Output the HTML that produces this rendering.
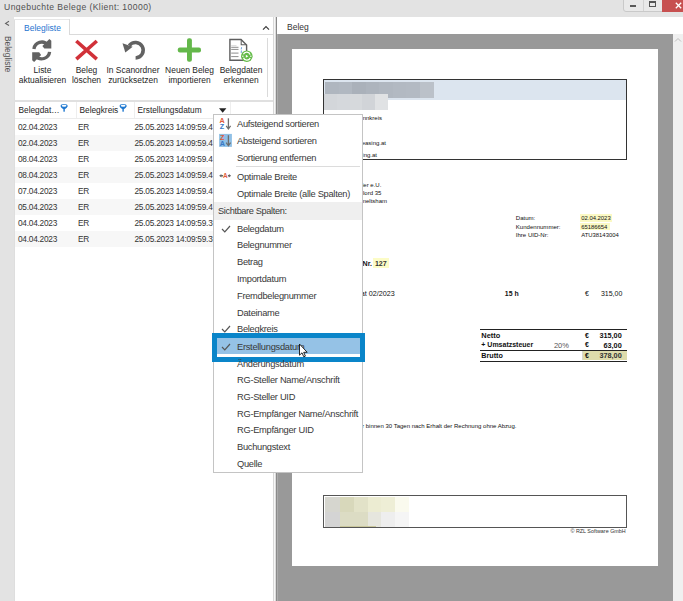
<!DOCTYPE html>
<html><head><meta charset="utf-8">
<style>
*{margin:0;padding:0;box-sizing:border-box}
html,body{width:683px;height:601px;overflow:hidden;background:#e3e3e3;font-family:"Liberation Sans",sans-serif;color:#333;position:relative}
.a{position:absolute}
.t{position:absolute;white-space:nowrap;line-height:1}
svg{position:absolute;overflow:visible}
</style></head><body>
<div class="t" style="top:3px;font-size:8.6px;color:#505050;letter-spacing:0.42px;left:4px;">Ungebuchte Belege (Klient: 10000)</div>
<div class="a" style="left:623px;top:-1px;width:40px;height:12.5px;background:#e9e9e9;border:1px solid #c9c9c9;border-radius:0 0 0 3px"></div>
<div class="a" style="left:643px;top:0px;width:1px;height:11px;background:#d2d2d2;"></div>
<div class="a" style="left:630px;top:5px;width:6px;height:2px;background:#5a5a5a;"></div>
<div class="a" style="left:649px;top:1px;width:7px;height:6px;border:1px solid #555;border-top-width:2px"></div>
<div class="a" style="left:662px;top:0px;width:21px;height:11.5px;background:#c75050;"></div>
<svg style="left:675px;top:1.5px" width="7" height="7"><path d="M0.8 0.8L6.2 6.2M6.2 0.8L0.8 6.2" stroke="#fff" stroke-width="1.3"/></svg>
<svg style="left:3px;top:20px" width="8" height="8"><path d="M6 1.3L2.6 3.4L6 5.5" stroke="#606060" stroke-width="1.1" fill="none"/></svg>
<div class="t" style="left:12px;top:36px;font-size:8.4px;color:#505050;transform-origin:0 0;transform:rotate(90deg)">Belegliste</div>
<div class="a" style="left:14px;top:17px;width:259px;height:584px;background:#fff;"></div>
<div class="a" style="left:14px;top:19px;width:1px;height:582px;background:#dedede;"></div>
<div class="a" style="left:272.7px;top:17px;width:1px;height:584px;background:#d8d8d8;"></div>
<div class="a" style="left:273.7px;top:17px;width:1.3px;height:584px;background:#f7f7f7;"></div>
<div class="a" style="left:14px;top:19px;width:56px;height:1px;background:#e6e6e6;"></div>
<div class="a" style="left:69px;top:19px;width:1px;height:16px;background:#dadada;"></div>
<div class="a" style="left:69px;top:34px;width:204px;height:1px;background:#dadada;"></div>
<div class="t" style="top:24px;font-size:8.5px;color:#1f74cf;left:24px;">Belegliste</div>
<svg style="left:262px;top:25px" width="8" height="6"><path d="M1 4.6L4 1.6L7 4.6" stroke="#3c3c3c" stroke-width="1.15" fill="none"/></svg>
<div class="a" style="left:267px;top:38px;width:1px;height:59px;background:#dadada;"></div>
<div class="a" style="left:14px;top:100px;width:259px;height:2px;background:#e0e0e0;"></div>
<svg style="left:28px;top:36px" width="28" height="28" viewBox="0 0 28 28">
 <path d="M5.9 13.0A7.9 7.9 0 0 1 19.8 8.9" stroke="#626262" stroke-width="3.3" fill="none"/>
 <path d="M14.4 10.0L21.4 3.0L23.3 4.7V12.6H16.3Z" fill="#626262"/>
 <path d="M21.6 15.9A7.9 7.9 0 0 1 7.7 20.0" stroke="#626262" stroke-width="3.3" fill="none"/>
 <path d="M13.1 18.9L6.1 25.9L4.2 24.2V16.3H11.2Z" fill="#626262"/>
</svg>
<svg style="left:70px;top:36px" width="32" height="28" viewBox="0 0 32 28">
 <path d="M6.3 5L26.8 23.2M26.8 5L6.3 23.2" stroke="#d13139" stroke-width="3.6"/>
</svg>
<svg style="left:118px;top:36px" width="32" height="28" viewBox="0 0 32 28">
 <path d="M17.6 21.9A7.75 7.75 0 1 0 11.2 9.6" stroke="#626262" stroke-width="3.5" fill="none"/>
 <path d="M7.3 16.6L4.5 7.3L14.7 10.8Z" fill="#626262"/>
</svg>
<svg style="left:174px;top:36px" width="32" height="28" viewBox="0 0 32 28">
 <rect x="13" y="2.3" width="4.9" height="23.5" rx="2" fill="#64b84b"/>
 <rect x="3.8" y="11.6" width="23.2" height="4.8" rx="2" fill="#64b84b"/>
</svg>
<svg style="left:225px;top:36px" width="32" height="28" viewBox="0 0 32 28">
 <path d="M4.9 3.5H16L21.6 9V24.3H4.9Z" fill="#fff" stroke="#5e5e5e" stroke-width="1.4" stroke-linejoin="miter"/>
 <path d="M16.2 3.8V8.8H21.3" fill="none" stroke="#5e5e5e" stroke-width="1.05"/>
 <path d="M6.2 9.6H11.5" stroke="#d8d8d8" stroke-width="0.9"/>
 <path d="M6.2 11.3H13.5M6.2 13.4H13.5M6.2 17.1H13.5M6.2 20.6H13.5" stroke="#8e8e8e" stroke-width="1"/>
 <path d="M16.6 11.2L16.2 13.4M16.4 14.5L16.2 17" stroke="#5e98d6" stroke-width="0.9"/>
 <circle cx="21.8" cy="20.2" r="5.8" fill="#64bb49"/>
 <path d="M18.4 18.3A3.6 3.6 0 0 1 25.1 18.6M25.2 22.1A3.6 3.6 0 0 1 18.5 21.8" stroke="#fff" stroke-width="1.25" fill="none"/>
 <path d="M17 20.2H18.6M25 20.2H26.6" stroke="#fff" stroke-width="1"/>
 <path d="M20.8 18.7L23.3 20.2L20.8 21.7Z" fill="#fff"/>
</svg>
<div class="t" style="top:66px;left:-7.5px;width:100px;text-align:center;font-size:8.45px;color:#262626">Liste</div>
<div class="t" style="top:76px;left:-7.5px;width:100px;text-align:center;font-size:8.45px;color:#262626">aktualisieren</div>
<div class="t" style="top:66px;left:36.5px;width:100px;text-align:center;font-size:8.45px;color:#262626">Beleg</div>
<div class="t" style="top:76px;left:36.5px;width:100px;text-align:center;font-size:8.45px;color:#262626">löschen</div>
<div class="t" style="top:66px;left:83px;width:100px;text-align:center;font-size:8.45px;color:#262626">In Scanordner</div>
<div class="t" style="top:76px;left:83px;width:100px;text-align:center;font-size:8.45px;color:#262626">zurücksetzen</div>
<div class="t" style="top:66px;left:139.5px;width:100px;text-align:center;font-size:8.45px;color:#262626">Neuen Beleg</div>
<div class="t" style="top:76px;left:139.5px;width:100px;text-align:center;font-size:8.45px;color:#262626">importieren</div>
<div class="t" style="top:66px;left:191px;width:100px;text-align:center;font-size:8.45px;color:#262626">Belegdaten</div>
<div class="t" style="top:76px;left:191px;width:100px;text-align:center;font-size:8.45px;color:#262626">erkennen</div>
<div class="a" style="left:15px;top:117.5px;width:258px;height:1px;background:#ececec;"></div>
<div class="a" style="left:76px;top:102px;width:1px;height:16px;background:#eeeeee;"></div>
<div class="a" style="left:134px;top:102px;width:1px;height:16px;background:#eeeeee;"></div>
<div class="a" style="left:230px;top:102px;width:1px;height:16px;background:#eeeeee;"></div>
<div class="t" style="top:106px;font-size:8.3px;color:#262626;left:18.5px;">Belegdat…</div>
<div class="t" style="top:106px;font-size:8.3px;color:#262626;left:79.5px;">Belegkreis</div>
<div class="t" style="top:106px;font-size:8.3px;color:#262626;left:137.5px;">Erstellungsdatum</div>
<svg style="left:59.5px;top:103px" width="8" height="10"><ellipse cx="4.1" cy="3.0" rx="3.5" ry="1.9" fill="#1e78d0"/><path d="M0.8 3.3Q1.4 5.2 3.4 6.3V8.6Q4.1 9.1 4.8 8.6V6.3Q6.8 5.2 7.4 3.3Z" fill="#1e78d0"/><ellipse cx="4.1" cy="2.8" rx="2.4" ry="0.95" fill="#fff"/></svg>
<svg style="left:119px;top:103px" width="8" height="10"><ellipse cx="4.1" cy="3.0" rx="3.5" ry="1.9" fill="#1e78d0"/><path d="M0.8 3.3Q1.4 5.2 3.4 6.3V8.6Q4.1 9.1 4.8 8.6V6.3Q6.8 5.2 7.4 3.3Z" fill="#1e78d0"/><ellipse cx="4.1" cy="2.8" rx="2.4" ry="0.95" fill="#fff"/></svg>
<svg style="left:219px;top:107.5px" width="8" height="6"><path d="M0 0.3H7.4L3.7 4.8Z" fill="#222"/></svg>
<div class="t" style="top:123px;font-size:8.3px;color:#333;letter-spacing:-0.25px;left:18px;">02.04.2023</div>
<div class="t" style="top:123px;font-size:8.3px;color:#333;letter-spacing:-0.2px;left:78px;">ER</div>
<div class="t" style="top:123px;font-size:8.3px;color:#333;letter-spacing:-0.24px;left:134.5px;">25.05.2023 14:09:59.4</div>
<div class="a" style="left:15px;top:134.5px;width:258px;height:16px;background:#f7f7f7;"></div>
<div class="t" style="top:139px;font-size:8.3px;color:#333;letter-spacing:-0.25px;left:18px;">02.04.2023</div>
<div class="t" style="top:139px;font-size:8.3px;color:#333;letter-spacing:-0.2px;left:78px;">ER</div>
<div class="t" style="top:139px;font-size:8.3px;color:#333;letter-spacing:-0.24px;left:134.5px;">25.05.2023 14:09:59.4</div>
<div class="t" style="top:155px;font-size:8.3px;color:#333;letter-spacing:-0.25px;left:18px;">08.04.2023</div>
<div class="t" style="top:155px;font-size:8.3px;color:#333;letter-spacing:-0.2px;left:78px;">ER</div>
<div class="t" style="top:155px;font-size:8.3px;color:#333;letter-spacing:-0.24px;left:134.5px;">25.05.2023 14:09:59.4</div>
<div class="a" style="left:15px;top:166.5px;width:258px;height:16px;background:#f7f7f7;"></div>
<div class="t" style="top:171px;font-size:8.3px;color:#333;letter-spacing:-0.25px;left:18px;">08.04.2023</div>
<div class="t" style="top:171px;font-size:8.3px;color:#333;letter-spacing:-0.2px;left:78px;">ER</div>
<div class="t" style="top:171px;font-size:8.3px;color:#333;letter-spacing:-0.24px;left:134.5px;">25.05.2023 14:09:59.4</div>
<div class="t" style="top:187px;font-size:8.3px;color:#333;letter-spacing:-0.25px;left:18px;">07.04.2023</div>
<div class="t" style="top:187px;font-size:8.3px;color:#333;letter-spacing:-0.2px;left:78px;">ER</div>
<div class="t" style="top:187px;font-size:8.3px;color:#333;letter-spacing:-0.24px;left:134.5px;">25.05.2023 14:09:59.4</div>
<div class="a" style="left:15px;top:198.5px;width:258px;height:16px;background:#f7f7f7;"></div>
<div class="t" style="top:203px;font-size:8.3px;color:#333;letter-spacing:-0.25px;left:18px;">05.04.2023</div>
<div class="t" style="top:203px;font-size:8.3px;color:#333;letter-spacing:-0.2px;left:78px;">ER</div>
<div class="t" style="top:203px;font-size:8.3px;color:#333;letter-spacing:-0.24px;left:134.5px;">25.05.2023 14:09:59.4</div>
<div class="t" style="top:219px;font-size:8.3px;color:#333;letter-spacing:-0.25px;left:18px;">04.04.2023</div>
<div class="t" style="top:219px;font-size:8.3px;color:#333;letter-spacing:-0.2px;left:78px;">ER</div>
<div class="t" style="top:219px;font-size:8.3px;color:#333;letter-spacing:-0.24px;left:134.5px;">25.05.2023 14:09:59.3</div>
<div class="a" style="left:15px;top:230.5px;width:258px;height:16px;background:#f7f7f7;"></div>
<div class="t" style="top:235px;font-size:8.3px;color:#333;letter-spacing:-0.25px;left:18px;">04.04.2023</div>
<div class="t" style="top:235px;font-size:8.3px;color:#333;letter-spacing:-0.2px;left:78px;">ER</div>
<div class="t" style="top:235px;font-size:8.3px;color:#333;letter-spacing:-0.24px;left:134.5px;">25.05.2023 14:09:59.3</div>
<div class="a" style="left:275px;top:17px;width:408px;height:584px;background:#fff;"></div>
<div class="a" style="left:275px;top:17px;width:1px;height:584px;background:#dcdcdc;"></div>
<div class="a" style="left:276px;top:17px;width:1px;height:584px;background:#8a8a8a;"></div>
<div class="a" style="left:277px;top:34px;width:1px;height:567px;background:#ababab;"></div>
<div class="a" style="left:278px;top:34px;width:395px;height:567px;background:#999;"></div>
<div class="a" style="left:673px;top:34px;width:10px;height:567px;background:#f0f0f0;"></div>
<svg style="left:674px;top:37px" width="8" height="6"><path d="M1 4.5L4 1.5L7 4.5" stroke="#bdbdbd" stroke-width="1" fill="none"/></svg>
<div class="t" style="top:23px;font-size:8.5px;color:#333;left:287px;">Beleg</div>
<div class="a" style="left:292px;top:49px;width:366px;height:517px;background:#fff;"></div>
<div class="a" style="left:323px;top:79px;width:304px;height:81px;border:1px solid #333;border-bottom-width:1.5px"></div>
<div class="a" style="left:324px;top:80px;width:302px;height:19.5px;background:#dce5ef;"></div>
<div class="a" style="left:325px;top:82px;width:14px;height:16px;background:#afb6bf;"></div>
<div class="a" style="left:338.5px;top:82px;width:14px;height:16px;background:#b1b8c1;"></div>
<div class="a" style="left:352.0px;top:82px;width:14px;height:16px;background:#aab1ba;"></div>
<div class="a" style="left:365.5px;top:82px;width:14px;height:16px;background:#adb4bd;"></div>
<div class="a" style="left:379.0px;top:82px;width:14px;height:16px;background:#b0b7c0;"></div>
<div class="a" style="left:392.5px;top:82px;width:14px;height:16px;background:#b2b9c2;"></div>
<div class="a" style="left:406.0px;top:82px;width:14px;height:16px;background:#b3bac3;"></div>
<div class="a" style="left:419.5px;top:82px;width:14px;height:16px;background:#bbc1c9;"></div>
<div class="a" style="left:324px;top:93.5px;width:13px;height:16px;background:#d3d6da;"></div>
<div class="a" style="left:336.8px;top:93.5px;width:13px;height:16px;background:#d5d8dc;"></div>
<div class="a" style="left:349.6px;top:93.5px;width:13px;height:16px;background:#d6d9dc;"></div>
<div class="a" style="left:362.4px;top:93.5px;width:13px;height:16px;background:#d1d4d8;"></div>
<div class="a" style="left:375.2px;top:93.5px;width:13px;height:16px;background:#e0e2e4;"></div>
<div class="t" style="top:115px;font-size:6px;color:#111;right:301px;text-align:right;">Sonnkreis</div>
<div class="t" style="top:140px;font-size:6px;color:#111;right:297px;text-align:right;">office@leasing.at</div>
<div class="t" style="top:152px;font-size:6px;color:#111;right:306px;text-align:right;">www.leasing.at</div>
<div class="t" style="top:182px;font-size:6px;color:#111;right:301.7px;text-align:right;">Müller e.U.</div>
<div class="t" style="top:190px;font-size:6px;color:#111;right:301.7px;text-align:right;">Gaslord 35</div>
<div class="t" style="top:198px;font-size:6px;color:#111;right:296px;text-align:right;">Himmeltsham</div>
<div class="a" style="left:579.5px;top:214px;width:32.5px;height:7.5px;background:#fbf9c4;"></div>
<div class="a" style="left:579.5px;top:222.7px;width:30px;height:7.5px;background:#fbf9c4;"></div>
<div class="t" style="top:215px;font-size:6.05px;color:#111;left:515.8px;">Datum:</div>
<div class="t" style="top:224px;font-size:6.05px;color:#111;left:515.8px;">Kundennummer:</div>
<div class="t" style="top:232px;font-size:6.05px;color:#111;left:515.8px;">Ihre UID-Nr:</div>
<div class="t" style="top:216px;font-size:5.9px;color:#111;left:581.2px;">02.04.2023</div>
<div class="t" style="top:225px;font-size:5.9px;color:#111;left:581.2px;">65186654</div>
<div class="t" style="top:233px;font-size:5.9px;color:#111;left:581.2px;">ATU38143004</div>
<div class="a" style="left:372.6px;top:258px;width:16.4px;height:9.5px;background:#fcfcc6;"></div>
<div class="t" style="top:261px;font-size:7.1px;color:#111;font-weight:bold;right:311px;text-align:right;">Rechnung Nr.</div>
<div class="t" style="top:261px;font-size:7.1px;color:#333;font-weight:bold;left:374.9px;">127</div>
<div class="t" style="top:290px;font-size:7.2px;color:#111;right:288.2px;text-align:right;">Leistungszeitraum Leasing Monat 02/2023</div>
<div class="t" style="top:291px;font-size:6.9px;color:#111;font-weight:bold;left:504.8px;">15 h</div>
<div class="t" style="top:291px;font-size:6.9px;color:#111;left:585.1px;">€</div>
<div class="t" style="top:290px;font-size:7.0px;color:#111;right:60.700000000000045px;text-align:right;">315,00</div>
<div class="a" style="left:480px;top:329.2px;width:147px;height:1px;background:#222;"></div>
<div class="a" style="left:480px;top:349.5px;width:147px;height:1.5px;background:#222;"></div>
<div class="a" style="left:582.2px;top:351px;width:44.5px;height:9.2px;background:#dedcab;border-left:1px solid #d8d8d0"></div>
<div class="a" style="left:480px;top:360.5px;width:147px;height:1.2px;background:#222;"></div>
<div class="t" style="top:332px;font-size:7.4px;color:#111;font-weight:bold;left:481.3px;">Netto</div>
<div class="t" style="top:341px;font-size:7.0px;color:#111;font-weight:bold;left:481.3px;">+ Umsatzsteuer</div>
<div class="t" style="top:352px;font-size:7.2px;color:#111;font-weight:bold;left:481.3px;">Brutto</div>
<div class="t" style="top:342px;font-size:7.5px;color:#555;right:114.10000000000002px;text-align:right;">20%</div>
<div class="t" style="top:332px;font-size:7.0px;color:#111;font-weight:bold;left:585.1px;">€</div>
<div class="t" style="top:341px;font-size:7.0px;color:#111;font-weight:bold;left:585.1px;">€</div>
<div class="t" style="top:352px;font-size:7.0px;color:#111;font-weight:bold;left:585.1px;">€</div>
<div class="t" style="top:332px;font-size:7.3px;color:#111;font-weight:bold;right:61.299999999999955px;text-align:right;">315,00</div>
<div class="t" style="top:342px;font-size:7.3px;color:#111;font-weight:bold;right:61.299999999999955px;text-align:right;">63,00</div>
<div class="t" style="top:352px;font-size:7.3px;color:#333;font-weight:bold;right:61.299999999999955px;text-align:right;">378,00</div>
<div class="t" style="top:423px;font-size:6.0px;color:#111;right:166.60000000000002px;text-align:right;">Zahlbar binnen 30 Tagen nach Erhalt der Rechnung ohne Abzug.</div>
<div class="a" style="left:323px;top:495px;width:304px;height:33px;border:1px solid #555"></div>
<div class="a" style="left:324.7px;top:496.7px;width:15.4px;height:15.4px;background:#d6d6cf;"></div>
<div class="a" style="left:324.7px;top:512.1px;width:15.4px;height:14.5px;background:#d4d4d4;"></div>
<div class="a" style="left:340.1px;top:496.7px;width:13.7px;height:15.4px;background:#d8d8bb;"></div>
<div class="a" style="left:340.1px;top:512.1px;width:13.7px;height:14.5px;background:#dcdcc4;"></div>
<div class="a" style="left:353.8px;top:496.7px;width:14.2px;height:15.4px;background:#e2e2c8;"></div>
<div class="a" style="left:353.8px;top:512.1px;width:14.2px;height:14.5px;background:#dcdcc4;"></div>
<div class="a" style="left:368px;top:496.7px;width:12.7px;height:15.4px;background:#ececd2;"></div>
<div class="a" style="left:368px;top:512.1px;width:12.7px;height:14.5px;background:#e6e6de;"></div>
<div class="a" style="left:380.7px;top:496.7px;width:14.2px;height:15.4px;background:#eeeed6;"></div>
<div class="a" style="left:380.7px;top:512.1px;width:14.2px;height:14.5px;background:#eeeeee;"></div>
<div class="a" style="left:394.9px;top:496.7px;width:13.8px;height:15.4px;background:#fafaee;"></div>
<div class="a" style="left:394.9px;top:512.1px;width:13.8px;height:14.5px;background:#f5f5f5;"></div>
<div class="a" style="left:340px;top:526px;width:36px;height:1px;background:#c9c79c;"></div>
<div class="a" style="left:324px;top:500px;width:1px;height:1.5px;background:#fff;"></div>
<div class="a" style="left:324px;top:504px;width:1px;height:1.5px;background:#fff;"></div>
<div class="a" style="left:324px;top:508px;width:1px;height:1.5px;background:#fff;"></div>
<div class="a" style="left:324px;top:512px;width:1px;height:1.5px;background:#fff;"></div>
<div class="a" style="left:324px;top:516px;width:1px;height:1.5px;background:#fff;"></div>
<div class="a" style="left:324px;top:520px;width:1px;height:1.5px;background:#fff;"></div>
<div class="a" style="left:324px;top:524px;width:1px;height:1.5px;background:#fff;"></div>
<div class="t" style="top:529px;font-size:5.4px;color:#333;right:57.299999999999955px;text-align:right;">© RZL Software GmbH</div>
<div class="a" style="left:213px;top:114px;width:150px;height:359px;background:#fff;border:1px solid #c4c4c4"></div>
<div class="a" style="left:236px;top:166px;width:124px;height:1px;background:#dcdcdc;"></div>
<div class="a" style="left:214px;top:202px;width:148px;height:17.5px;background:#efefef;"></div>
<svg style="left:215px;top:115px" width="22" height="35" viewBox="0 0 22 35">
 <text x="4.5" y="8" font-family="Liberation Sans" font-weight="bold" font-size="7.2" fill="#e05a3a">A</text>
 <text x="4.8" y="14.1" font-family="Liberation Sans" font-weight="bold" font-size="7.2" fill="#3a78c4">Z</text>
 <path d="M13.4 3.3V13.2" stroke="#6e6e6e" stroke-width="1.3"/>
 <path d="M11.2 10.8L13.4 13.9L15.6 10.8" stroke="#6e6e6e" stroke-width="1.2" fill="none"/>
 <rect x="4.1" y="18.9" width="12.8" height="13" fill="#90c0e6"/>
 <text x="4.9" y="25" font-family="Liberation Sans" font-weight="bold" font-size="7.2" fill="#e05a3a">Z</text>
 <text x="4.7" y="30.8" font-family="Liberation Sans" font-weight="bold" font-size="7.2" fill="#3a78c4">A</text>
 <path d="M13.4 20.2V30" stroke="#6e6e6e" stroke-width="1.3"/>
 <path d="M11.2 27.6L13.4 30.7L15.6 27.6" stroke="#6e6e6e" stroke-width="1.2" fill="none"/>
</svg>
<svg style="left:215px;top:168px" width="22" height="16" viewBox="0 0 22 16">
 <path d="M4.2 7.7L6.4 5.9V7H8V8.4H6.4V9.5Z" fill="#666"/>
 <text x="7.9" y="10" font-family="Liberation Sans" font-weight="bold" font-size="6.4" fill="#e05a3a">A</text>
 <path d="M16.1 7.7L13.9 5.9V7H12.9V8.4H13.9V9.5Z" fill="#666"/>
</svg>
<div class="t" style="top:120px;font-size:9.3px;color:#383838;letter-spacing:-0.28px;left:237px;">Aufsteigend sortieren</div>
<div class="t" style="top:137px;font-size:9.3px;color:#383838;letter-spacing:-0.28px;left:237px;">Absteigend sortieren</div>
<div class="t" style="top:154px;font-size:9.3px;color:#383838;letter-spacing:-0.28px;left:237px;">Sortierung entfernen</div>
<div class="t" style="top:173px;font-size:9.3px;color:#383838;letter-spacing:-0.28px;left:237px;">Optimale Breite</div>
<div class="t" style="top:190px;font-size:9.3px;color:#383838;letter-spacing:-0.28px;left:237px;">Optimale Breite (alle Spalten)</div>
<div class="t" style="top:207px;font-size:9.2px;color:#383838;letter-spacing:-0.36px;left:218px;">Sichtbare Spalten:</div>
<div class="t" style="top:225px;font-size:9.3px;color:#383838;letter-spacing:-0.28px;left:237px;">Belegdatum</div>
<svg style="left:221px;top:225px" width="10" height="8"><path d="M1 4L3.8 6.8L9 1" stroke="#555" stroke-width="1.2" fill="none"/></svg>
<div class="t" style="top:241px;font-size:9.3px;color:#383838;letter-spacing:-0.28px;left:237px;">Belegnummer</div>
<div class="t" style="top:258px;font-size:9.3px;color:#383838;letter-spacing:-0.28px;left:237px;">Betrag</div>
<div class="t" style="top:275px;font-size:9.3px;color:#383838;letter-spacing:-0.28px;left:237px;">Importdatum</div>
<div class="t" style="top:292px;font-size:9.3px;color:#383838;letter-spacing:-0.28px;left:237px;">Fremdbelegnummer</div>
<div class="t" style="top:309px;font-size:9.3px;color:#383838;letter-spacing:-0.28px;left:237px;">Dateiname</div>
<div class="t" style="top:325px;font-size:9.3px;color:#383838;letter-spacing:-0.28px;left:237px;">Belegkreis</div>
<svg style="left:221px;top:325px" width="10" height="8"><path d="M1 4L3.8 6.8L9 1" stroke="#555" stroke-width="1.2" fill="none"/></svg>
<div class="a" style="left:212px;top:333px;width:153px;height:29px;background:#0a85c9;"></div>
<div class="a" style="left:217px;top:338px;width:143px;height:19px;background:#fff;"></div>
<div class="a" style="left:217px;top:338px;width:143px;height:16px;background:#95c2e6;"></div>
<div class="t" style="top:343px;font-size:9.3px;color:#383838;letter-spacing:-0.28px;left:237px;">Erstellungsdatum</div>
<svg style="left:221px;top:343px" width="10" height="8"><path d="M1 4L3.8 6.8L9 1" stroke="#555" stroke-width="1.2" fill="none"/></svg>
<div class="t" style="top:360px;font-size:9.3px;color:#383838;letter-spacing:-0.28px;left:237px;">Änderungsdatum</div>
<div class="t" style="top:376px;font-size:9.3px;color:#383838;letter-spacing:-0.28px;left:237px;">RG-Steller Name/Anschrift</div>
<div class="t" style="top:393px;font-size:9.3px;color:#383838;letter-spacing:-0.28px;left:237px;">RG-Steller UID</div>
<div class="t" style="top:410px;font-size:9.3px;color:#383838;letter-spacing:-0.28px;left:237px;">RG-Empfänger Name/Anschrift</div>
<div class="t" style="top:426px;font-size:9.3px;color:#383838;letter-spacing:-0.28px;left:237px;">RG-Empfänger UID</div>
<div class="t" style="top:443px;font-size:9.3px;color:#383838;letter-spacing:-0.28px;left:237px;">Buchungstext</div>
<div class="t" style="top:460px;font-size:9.3px;color:#383838;letter-spacing:-0.28px;left:237px;">Quelle</div>
<svg style="left:298px;top:343px" width="12" height="16" viewBox="0 0 12 16">
 <path d="M1.5 1V12.2L4 9.8L5.8 13.8L7.4 13.1L5.7 9.3H9.2Z" fill="#fff" stroke="#111" stroke-width="0.9" stroke-linejoin="round"/>
</svg>
</body></html>
